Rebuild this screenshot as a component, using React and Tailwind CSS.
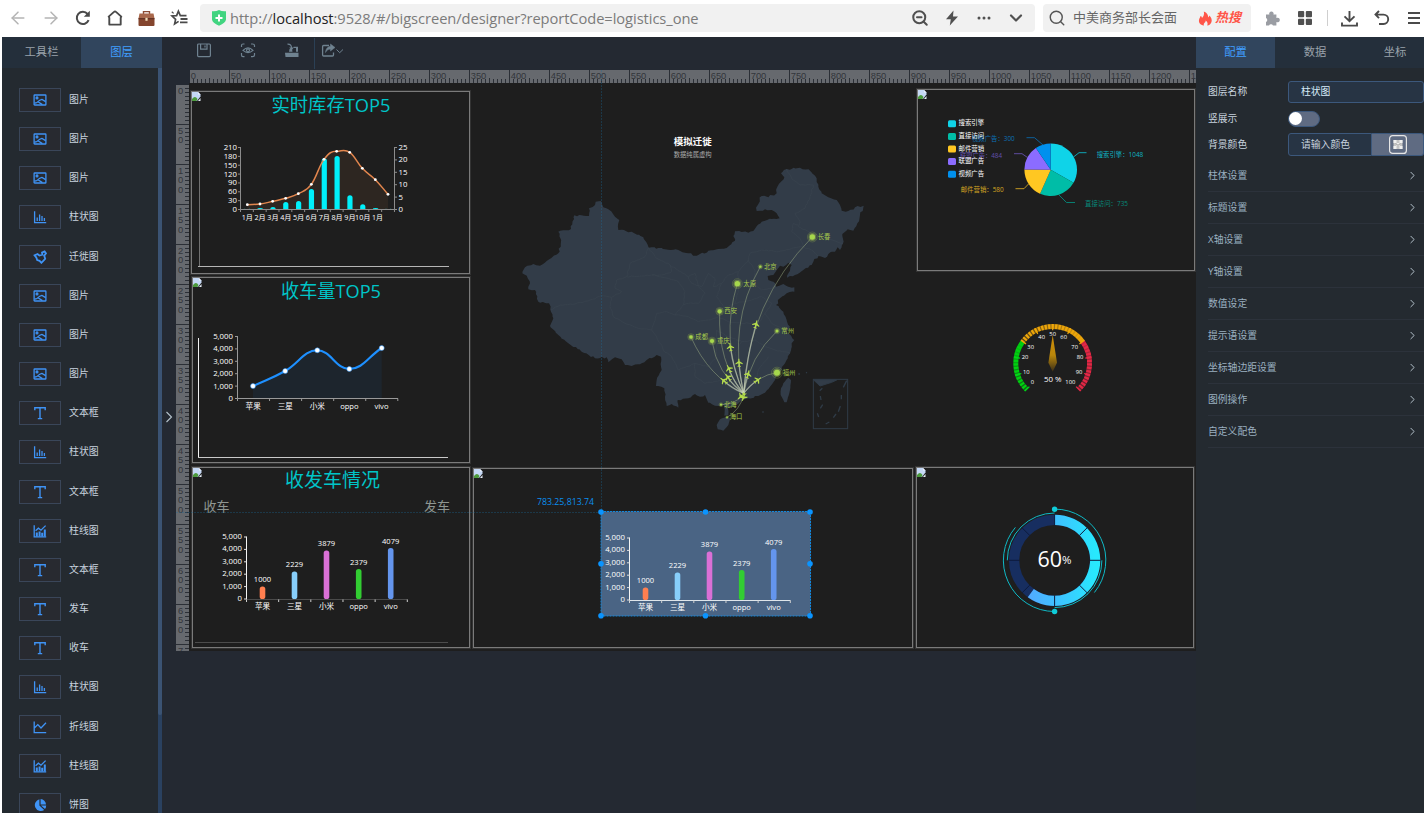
import React from "react";
import { ArrowLeft, ArrowRight, ChevronDown, ChevronRight, Search, ZoomOut } from "lucide-react";

const FONT = "'Open Sans','Noto Sans CJK SC',sans-serif";

/* ---------- shared drawing helpers ---------- */

function Label({ x, y, s = 7.8, w, a = "middle", c = "#ffffff", children, ...rest }) {
  return (
    <text
      x={x}
      y={y}
      fontSize={s}
      fill={c}
      textAnchor={a}
      dominantBaseline="central"
      textLength={w}
      lengthAdjust="spacingAndGlyphs"
      {...rest}
    >
      {children}
    </text>
  );
}

function smooth(pts) {
  let d = `M${pts[0][0]} ${pts[0][1]}`;
  const n = pts.length;
  const m = pts.map((p, i) => {
    if (i === 0) return (pts[1][1] - p[1]) / (pts[1][0] - p[0]);
    if (i === n - 1) return (p[1] - pts[i - 1][1]) / (p[0] - pts[i - 1][0]);
    const s0 = (p[1] - pts[i - 1][1]) / (p[0] - pts[i - 1][0]);
    const s1 = (pts[i + 1][1] - p[1]) / (pts[i + 1][0] - p[0]);
    return s0 * s1 <= 0 ? 0 : (s0 + s1) / 2;
  });
  for (let i = 0; i < n - 1; i++) {
    const h = (pts[i + 1][0] - pts[i][0]) / 2.4;
    d += `C${pts[i][0] + h} ${pts[i][1] + m[i] * h} ${pts[i + 1][0] - h} ${pts[i + 1][1] - m[i + 1] * h} ${pts[i + 1][0]} ${pts[i + 1][1]}`;
  }
  return d;
}

function polar(cx, cy, r, deg) {
  const t = ((deg - 90) * Math.PI) / 180;
  return [cx + r * Math.cos(t), cy + r * Math.sin(t)];
}

function arc(cx, cy, r, a0, a1) {
  const [x0, y0] = polar(cx, cy, r, a0);
  const [x1, y1] = polar(cx, cy, r, a1);
  return `M${x0} ${y0}A${r} ${r} 0 ${a1 - a0 > 180 ? 1 : 0} 1 ${x1} ${y1}`;
}

function roughen(text, amp = 3) {
  const pts = text.trim().split(/\s+/).map((p) => p.split(",").map(Number));
  let seed = 7;
  const rnd = () => {
    seed = (seed * 16807) % 2147483647;
    return seed / 2147483647 - 0.5;
  };
  const out = [];
  pts.forEach((p, i) => {
    out.push(p);
    const q = pts[i + 1];
    if (!q) return;
    const len = Math.hypot(q[0] - p[0], q[1] - p[1]);
    const k = Math.floor(len / 7);
    for (let j = 1; j < k; j++) {
      out.push([p[0] + ((q[0] - p[0]) * j) / k + rnd() * amp * 2, p[1] + ((q[1] - p[1]) * j) / k + rnd() * amp * 2]);
    }
  });
  return out.map((p) => `${p[0].toFixed(1)},${p[1].toFixed(1)}`).join(" ");
}

/* ---------- browser bar ---------- */

function BrowserBar() {
  return (
    <header className="flex h-[37px] w-full shrink-0 items-center bg-white pb-px">
      <div className="flex w-[200px] items-center text-[#555]">
        <div className="flex w-[34px] justify-end pr-1.5"><ArrowLeft size={20} strokeWidth={1.8} className="text-[#b4b4b4]" /></div>
        <div className="flex w-[33px] justify-center"><ArrowRight size={20} strokeWidth={1.8} className="text-[#b4b4b4]" /></div>
        <div className="flex w-8 justify-center">
          <svg width="16" height="16" viewBox="0 0 16 16" fill="none" stroke="#4a4a4a" strokeWidth="2">
            <path d="M13.6 10.2A6.1 6.1 0 1 1 12.6 4" />
            <path d="M14.8 0.8v6H8.8z" fill="#4a4a4a" stroke="none" />
          </svg>
        </div>
        <div className="flex w-8 justify-center">
          <svg width="16" height="16" viewBox="0 0 16 16" fill="none" stroke="#4a4a4a" strokeWidth="1.9" strokeLinejoin="round">
            <path d="M8 1.500 Q8.600 1.500 9 1.900L14.300 6.600Q13.700 7 13.700 8V14.600H2.300V8Q2.300 7 1.700 6.600L7 1.900Q7.400 1.500 8 1.500Z" />
          </svg>
        </div>
        <div className="flex w-[31px] justify-center">
          <svg width="17" height="17" viewBox="0 0 17 17">
            <path d="M5.500 4V1.600h6V4" fill="none" stroke="#8a4a32" strokeWidth="1.400" />
            <path d="M1.500 3.400H15.500L16.600 9H0.400Z" fill="#a9684c" />
            <rect x="0.500" y="8.400" width="16" height="7.600" rx="1" fill="#84452e" />
            <rect x="0.500" y="8.200" width="16" height="1" fill="#5a2c1e" />
            <rect x="7.400" y="7.800" width="2.200" height="3" fill="#f0dcb8" />
          </svg>
        </div>
        <div className="flex w-[33px] justify-center">
          <svg width="18" height="18" viewBox="0 0 18 18" fill="none" stroke="#4a4a4a" strokeWidth="1.700">
            <path d="M8.600 12.400 4.600 15 5.600 10.400 2 7 6.600 6.600 8.400 2.200 10.300 6.600 16.500 6.600" />
            <path d="M10.500 10h7M10 13.300h7.500" strokeWidth="1.800" />
            <path d="M1.800 2.800 3.600 4.400" strokeWidth="1.200" />
          </svg>
        </div>
      </div>
      <div className="flex h-7 w-[835px] items-center rounded bg-[#f1f1f1] pl-3">
        <svg width="14" height="16" viewBox="0 0 14 16">
          <path d="M0 1.200Q4 1.600 7 0 10 1.600 14 1.200V9.500Q13.600 13 7 15.800 0.400 13 0 9.500Z" fill="#41d480" />
          <path d="M7 4.400v7M3.500 7.900h7" stroke="#fff" strokeWidth="2" />
        </svg>
        <span className="ml-1 whitespace-nowrap text-[14.700px] tracking-[-0.070px] text-[#7b7b7b]">
          http://<span className="text-[#222]">localhost</span>:9528/#/bigscreen/designer?reportCode=logistics_one
        </span>
        <div className="ml-auto flex items-center text-[#505050]">
          <div className="flex w-8 justify-center"><ZoomOut size={18} strokeWidth={2.700} /></div>
          <div className="flex w-8 justify-center">
            <svg width="14" height="16" viewBox="0 0 14 16"><path d="M8.500 0.500 1 9.200H5.800L4.800 15.500 13 6.500H8Z" fill="#505050" /></svg>
          </div>
          <div className="flex w-8 justify-center">
            <svg width="14" height="4" viewBox="0 0 14 4" fill="#505050"><circle cx="2" cy="2" r="1.500" /><circle cx="7" cy="2" r="1.500" /><circle cx="12" cy="2" r="1.500" /></svg>
          </div>
          <div className="mr-[3px] flex w-8 justify-center"><ChevronDown size={20} strokeWidth={2.600} /></div>
        </div>
      </div>
      <div className="ml-2 flex h-7 w-[208px] items-center rounded bg-[#f1f1f1] pl-[5px]">
        <Search size={18} strokeWidth={1.900} className="text-[#555]" />
        <span className="ml-[7px] w-[116px] whitespace-nowrap text-[13px] text-[#666]">中美商务部长会面</span>
        <svg className="ml-[9px]" width="15" height="15" viewBox="0 0 15 15">
          <path d="M6 14.600C2 14 0.600 11.500 1 9 1.300 7.200 2.200 6.600 2.500 5 3.600 5.400 3.900 6.200 4 7 5.500 5.500 6.600 3.500 5.800 0.500 9 1.600 10.300 4.200 10.200 6.400 10.900 6 11.200 5.400 11.300 4.600 13.300 6.500 14.200 8.800 13.500 11 12.900 13 11.300 14.200 9.200 14.600 10.200 12.600 9.300 11 7.700 9.600 7.800 11.200 6.700 11.400 6 12.400 5.600 13.100 5.600 13.800 6 14.600Z" fill="#ff5548" />
        </svg>
        <span className="ml-0.5 text-[13px] font-bold italic text-[#ff5548]">热搜</span>
      </div>
      <div className="flex flex-1 items-center">
        <svg className="ml-[13px]" width="17" height="17" viewBox="0 0 17 17">
          <path d="M2 4.500H5.400A2.200 2.200 0 1 1 9.400 4.500H12.400V8A2.300 2.300 0 1 1 12.400 12V15.500H9A2.200 2.200 0 0 0 5 15.500H2V12A2.200 2.200 0 0 0 2 8Z" fill="#9a9da3" />
        </svg>
        <svg className="ml-4" width="16" height="16" viewBox="0 0 16 16" fill="#505050">
          <rect x="1" y="1" width="6.200" height="6.200" rx="1" /><rect x="8.800" y="1" width="6.200" height="6.200" rx="1" />
          <rect x="1" y="8.800" width="6.200" height="6.200" rx="1" /><rect x="8.800" y="8.800" width="6.200" height="6.200" rx="1" />
        </svg>
        <div className="ml-[14px] h-4 w-px bg-[#cfcfcf]" />
        <svg className="ml-[13px]" width="17" height="17" viewBox="0 0 17 17" fill="none" stroke="#4a4a4a" strokeWidth="1.900">
          <path d="M8.500 1v10M3.500 6.400 8.500 11.200 13.500 6.400M1 12.500V15.600H16V12.500" />
        </svg>
        <svg className="ml-4" width="16" height="16" viewBox="0 0 16 16" fill="none" stroke="#4a4a4a" strokeWidth="1.900">
          <path d="M5 1 1.500 4.600 5 8.200M1.500 4.600H9.500A4.700 4.700 0 0 1 9.500 14H5" />
        </svg>
        <svg className="ml-[18px]" width="13" height="14" viewBox="0 0 13 14" stroke="#4a4a4a" strokeWidth="1.900"><path d="M0 2h12M0 7h12M0 12h12" /></svg>
      </div>
    </header>
  );
}

/* ---------- layer list ---------- */

function LayerIcon({ type }) {
  const p = { fill: "none", stroke: "#3f93f5", strokeWidth: 1.300 };
  return (
    <svg width="14" height="14" viewBox="0 0 14 14" {...p}>
      {type === "img" && (<><rect x="1.100" y="2" width="11.800" height="10" rx="0.600" /><circle cx="4" cy="4.900" r="0.900" /><path d="M1.500 10Q3.500 10.200 5 8.600T9 6.400L12.600 8.600M5 8.800 9.400 11.600" /></>)}
      {type === "text" && (<path d="M1.800 4.200V1.800H12.200V4.200M7 1.800V12.400M4.800 12.600H9.200" strokeWidth="1.400" />)}
      {type === "bar" && (<><path d="M1.600 1.200V12.600H13.200" /><path d="M4.200 11V7.500M6.600 11V4.500M9 11V6M11.400 11V8" /></>)}
      {type === "map" && (<path strokeWidth="1.800" d="M1.600 5.400 4.600 4 6.400 5.600 9.400 4.600 9 2.600 11.600 1.400 13 3.400 11.200 5.600 12.200 8.800 9.800 11.400 8.400 12.800 6.600 10.800 4.200 10 3.400 7.600Z" />)}
      {type === "mix" && (<><path d="M1.200 1.200V12.800H13.200M2.600 6.800 5.400 4.200 8 6.200 12.600 1.600" /><path strokeWidth="2" d="M3.800 12.600V8.600M6.600 12.600V7.400M9.200 12.600V8.800M11.800 12.600V5.600" /></>)}
      {type === "line" && (<path d="M1.200 1.600V12.600H13.200M1.600 7.800 4.800 4.600 8 8 13 2.800" />)}
      {type === "pie" && (<><path fill="#3f93f5" stroke="none" d="M6.400 1.200V7.600L11.200 12A6 6 0 1 1 6.400 1.200Z" /><path fill="#3f93f5" stroke="none" d="M7.600 1V6.400H13A5.600 5.600 0 0 0 7.600 1ZM8 7.400 12 11Q13.200 9.500 13.200 7.400Z" /></>)}
    </svg>
  );
}

const LAYERS = [
  ["img", "图片"], ["img", "图片"], ["img", "图片"], ["bar", "柱状图"], ["map", "迁徙图"],
  ["img", "图片"], ["img", "图片"], ["img", "图片"], ["text", "文本框"], ["bar", "柱状图"],
  ["text", "文本框"], ["mix", "柱线图"], ["text", "文本框"], ["text", "发车"], ["text", "收车"],
  ["bar", "柱状图"], ["line", "折线图"], ["mix", "柱线图"], ["pie", "饼图"],
];

function LayerPanel() {
  return (
    <aside className="flex h-full w-40 shrink-0 flex-col bg-[#242a30]">
      <div className="flex h-[31px] shrink-0 text-[11.300px] leading-[30px]">
        <div className="w-[79px] bg-[#242f3b] text-center text-[#9aa3ab]">工具栏</div>
        <div className="w-[81px] bg-[#31455d] text-center text-[#409eff]">图层</div>
      </div>
      <div className="flex min-h-0 flex-1">
        <ul className="flex-1 overflow-hidden pl-[17px] pt-5">
          {LAYERS.map(([type, name], i) => (
            <li key={i} className="flex h-[39.170px] items-start">
              <span className="flex h-6 w-[42px] items-center justify-center border border-[#3a4659] bg-[#282a30]"><LayerIcon type={type} /></span>
              <span className="ml-2 text-[9.900px] leading-[23px] text-[#c8d3df]">{name}</span>
            </li>
          ))}
        </ul>
        <div className="w-1 bg-[#2a4160]"><div className="h-[647px] rounded-b bg-[#3b5373]" /></div>
      </div>
    </aside>
  );
}

/* ---------- rulers ---------- */

function TopRuler() {
  const ticks = [];
  for (let i = 0; i <= 251; i++) {
    const major = i % 10 === 0;
    ticks.push(<path key={i} d={`M${i * 4 - 0.500} ${major ? 0 : i % 5 === 0 ? 8 : 9}V13`} />);
  }
  return (
    <svg width="1006" height="13" className="block shrink-0 bg-[#66696e]">
      <g stroke="#2b2f36" strokeWidth="1">{ticks}</g>
      <g fontFamily="'Liberation Sans',sans-serif" fontSize="9.400" fill="#33363b">
        {Array.from({ length: 25 }, (_, k) => (<text key={k} x={k * 40 + 0.700} y="9">{k * 50}</text>))}
        <text x="1000.700" y="9">1</text>
      </g>
    </svg>
  );
}

function SideRuler() {
  const ticks = [];
  for (let i = 0; i <= 141; i++) {
    const major = i % 10 === 0;
    ticks.push(<path key={i} d={`M${major ? 0 : 9} ${i * 4 - 0.500}H13`} />);
  }
  return (
    <svg width="13" height="566" className="block shrink-0 bg-[#66696e]">
      <g stroke="#2b2f36" strokeWidth="1">{ticks}</g>
      <g fontFamily="'Liberation Sans',sans-serif" fontSize="9.400" fill="#33363b">
        {Array.from({ length: 14 }, (_, k) =>
          String(k * 50).split("").map((ch, j) => (<text key={`${k}-${j}`} x="2" y={k * 40 + 9 + j * 9.400}>{ch}</text>))
        )}
        <text x="2" y="569">7</text>
      </g>
    </svg>
  );
}

/* ---------- canvas widgets ---------- */

function Picture({ className }) {
  return (
    <div className={`absolute border border-[#7a7a7a] shadow-[0_0_0_1px_#333] ${className}`}>
      <svg width="9" height="9" viewBox="0 0 9 9" className="block">
        <path d="M0 0H6L8.500 2.500V4.500L5 9H0Z" fill="#c5d8f5" />
        <path d="M0 7Q3 3 5.500 7L4.500 9H0Z" fill="#4c9a3c" />
        <path d="M6 0V2.500H8.500Z" fill="#eef3fb" />
        <path d="M8.500 6V9H6Z" fill="#e8f0fa" />
      </svg>
    </div>
  );
}

function StockChart() {
  const tops = [627, 624, 621, 606, 603, 567, 475, 468, 586, 613, 624, 627];
  const pts = [[742, 614], [780, 612], [818, 604], [857, 595], [895, 581], [934, 553], [972, 478], [1010, 454], [1049, 457], [1087, 505], [1126, 539], [1164, 583]].map(([a, b]) => [a / 3, b / 3]);
  const d = smooth(pts);
  return (
    <svg className="absolute left-[3px] top-[9px]" width="276" height="180" viewBox="192 92 276 180" fontFamily={FONT}>
      <path d="M199.500 149V267" stroke="#707070" />
      <path d="M198 266.500H449" stroke="#b5b5b5" />
      <Label x={331} y={105} s={18.800} w={119} c="#00c5c8">实时库存TOP5</Label>
      <path d={`${d}V209H247.300Z`} fill="#e8894e" opacity="0.080" />
      {tops.map((t, i) => (
        <path key={i} d={`M${244.700 + i * 12.830} 209V${Math.min(t / 3 + 2.500, 208.500)}Q${244.700 + i * 12.830} ${t / 3} ${247.300 + i * 12.830} ${t / 3}T${249.900 + i * 12.830} ${Math.min(t / 3 + 2.500, 208.500)}V209Z`} fill="#00f0fa" />
      ))}
      <g stroke="#8c8c8c" fill="none">
        <path d="M240.500 147V209.500H394.500V147" />
        {Array.from({ length: 8 }, (_, i) => <path key={i} d={`M238 ${147.500 + i * 8.860}H240.500`} />)}
        {Array.from({ length: 6 }, (_, i) => <path key={i} d={`M394.500 ${147.500 + i * 12.400}H397`} />)}
        {Array.from({ length: 13 }, (_, i) => <path key={i} d={`M${240.500 + i * 12.830} 209.500V212`} />)}
      </g>
      <path d={d} fill="none" stroke="#e2864e" strokeWidth="1.500" />
      {pts.map(([x, y], i) => <circle key={i} cx={x} cy={y} r="1.400" fill="#fff" />)}
      {[210, 180, 150, 120, 90, 60, 30, 0].map((v, i) => <Label key={v} x={237} y={147 + i * 8.860} a="end">{v}</Label>)}
      {[25, 20, 15, 10, 5, 0].map((v, i) => <Label key={v} x={398.500} y={147 + i * 12.400} a="start">{v}</Label>)}
      {["1月", "2月", "3月", "4月", "5月", "6月", "7月", "8月", "9月", "10月"].map((v, i) => <Label key={v} x={247.300 + i * 12.830} y={216.500} s={7.300} w={v.length > 2 ? 15.500 : 11.300}>{v}</Label>)}
      <Label x={377.500} y={216.500} s={7.300} w={11}>1月</Label>
    </svg>
  );
}

function VolumeChart() {
  const pts = [[253, 386], [285.200, 371], [317.300, 350.300], [349.300, 369], [381.700, 348]];
  const d = smooth(pts);
  return (
    <svg className="absolute left-[4px] top-[196px]" width="275" height="182" viewBox="193 279 275 182" fontFamily={FONT}>
      <path d="M198.500 338V458" stroke="#f4f4f4" />
      <path d="M198 457.500H448" stroke="#c9c9c9" />
      <Label x={331} y={291} s={18.800} w={100} c="#00c5c8">收车量TOP5</Label>
      <path d={`${d}V398H253Z`} fill="#1e90ff" opacity="0.070" />
      <g stroke="#999" fill="none">
        <path d="M237.500 336V398.500H398" />
        {Array.from({ length: 6 }, (_, i) => <path key={i} d={`M235 ${336.500 + i * 12.400}H237.500`} />)}
        {Array.from({ length: 6 }, (_, i) => <path key={i} d={`M${237.500 + i * 32.060} 398.500V401`} />)}
      </g>
      <path d={d} fill="none" stroke="#1e90ff" strokeWidth="2.100" />
      {pts.map(([x, y], i) => <circle key={i} cx={x} cy={y} r="2.500" fill="#fff" stroke="#1e90ff" strokeWidth="0.500" />)}
      {["5,000", "4,000", "3,000", "2,000", "1,000", "0"].map((v, i) => <Label key={v} x={233} y={336 + i * 12.400} a="end">{v}</Label>)}
      {["苹果", "三星", "小米", "oppo", "vivo"].map((v, i) => <Label key={v} x={253.200 + i * 32.060} y={405.700} s={7.600}>{v}</Label>)}
    </svg>
  );
}

function SalesBars({ axis = "#fff" }) {
  const data = [
    [262.500, 586.500, "1000", "苹果", "#ff7f50"],
    [294.500, 571.500, "2229", "三星", "#87cefa"],
    [326.500, 550.500, "3879", "小米", "#da70d6"],
    [358.700, 569, "2379", "oppo", "#32cd32"],
    [390.700, 548, "4079", "vivo", "#6495ed"],
  ];
  return (
    <g fontFamily={FONT}>
      <path d="M246.500 536.500V599.500" stroke="#f5f5f5" />
      <path d="M246.500 599.500H407.500" stroke={axis} />
      {Array.from({ length: 6 }, (_, i) => <path key={i} d={`M244 ${537 + i * 12.400}H246.500`} stroke="#e0e0e0" />)}
      {Array.from({ length: 6 }, (_, i) => <path key={i} d={`M${246.500 + i * 32.160} 599.500V602`} stroke="#d0d0d0" />)}
      {["5,000", "4,000", "3,000", "2,000", "1,000", "0"].map((v, i) => <Label key={v} x={242} y={536 + i * 12.400} a="end">{v}</Label>)}
      {data.map(([x, y, v, n, c]) => (
        <g key={n}>
          <rect x={x - 2.800} y={y} width="5.600" height={599 - y} rx="2.600" fill={c} />
          <Label x={x} y={y - 7.400} s={7.800} w={17.300}>{v}</Label>
          <Label x={x} y={605.700} s={7.600}>{n}</Label>
        </g>
      ))}
    </g>
  );
}

function ShippingPanel() {
  return (
    <svg className="absolute left-[4px] top-[385px]" width="275" height="179" viewBox="193 468 275 179" fontFamily={FONT}>
      <Label x={332.500} y={480} s={19} w={95} c="#00c5c8">收发车情况</Label>
      <Label x={216.500} y={506} s={13} c="#8f9691">收车</Label>
      <Label x={437} y={506} s={13} c="#8f9691">发车</Label>
      <path d="M195 642.500H448" stroke="#4c4c4c" />
      <SalesBars axis="#4a4a4a" />
    </svg>
  );
}

const CHINA = `142,370 150,352 175,342 195,347 215,333 250,310 258,275 250,245 288,237 298,196 342,198 342,175 360,165 362,155 378,153 385,172 410,185 420,200 433,210 430,240 470,245 505,262 521,293 560,294 610,300 640,310 665,317 700,302 755,294 780,272 775,258 780,244 800,246 820,248 840,236 860,215 890,207 914,205 905,190 890,180 870,178 845,183 843,173 860,138 880,142 905,130 905,115 918,95 928,82 918,70 935,57 970,54 1005,62 1025,85 1030,110 1040,130 1060,142 1085,150 1095,165 1100,182 1120,183 1140,172 1166,167 1155,195 1147,220 1135,242 1118,238 1102,252 1104,280 1095,300 1088,292 1080,305 1060,312 1050,324 1030,318 1015,335 1010,345 985,360 960,375 936,383 945,362 950,345 940,338 925,350 915,347 905,360 895,375 878,378 880,390 895,395 903,410 925,402 940,410 958,412 958,425 935,430 915,445 903,465 925,485 935,510 945,530 935,545 958,570 950,580 945,610 930,640 920,660 900,690 885,710 870,728 850,738 820,745 800,752 780,765 758,772 760,795 748,797 746,765 720,767 700,758 690,735 675,740 660,732 640,745 608,750 610,773 590,762 575,768 570,740 568,715 543,708 545,690 560,660 558,620 545,615 515,630 500,640 470,648 450,645 440,628 420,622 400,637 395,622 360,625 320,605 280,580 250,555 225,528 235,505 228,485 222,460 190,455 180,420 160,418 165,400 158,385 142,370`;

const PROVINCES = [
  "228,480 255,465 300,462 345,450 380,437 410,442 405,470 415,500 450,520 490,535 530,540 545,560 565,600",
  "521,293 510,320 465,340 455,380 425,390 420,415 440,425 410,442",
  "455,380 500,378 530,375 580,385 610,395 630,425 625,465 600,495 575,485 545,490 530,540",
  "521,293 545,325 585,345 590,365 560,375 530,375",
  "585,345 640,380 660,370 670,410 690,430 670,460 640,460 625,465",
  "640,380 650,400 680,410 700,370 720,385 715,410 740,400 760,375 790,365 820,330",
  "740,400 725,440 745,470 730,500 700,510 670,515 640,500 600,495",
  "820,330 825,310 860,300 910,305 950,295 985,290 975,265 950,245 955,220 970,225",
  "935,57 950,85 975,105 1015,105 1005,140 990,175 960,190 975,215 970,230 1010,250 1050,265 1104,280",
  "985,290 1010,300 1030,318",
  "790,365 790,420 780,460 740,475",
  "820,330 840,360 835,400 860,420 903,410",
  "780,460 830,450 860,440 890,460 870,490 890,520 935,545",
  "730,500 760,515 800,520 850,520 870,490",
  "725,540 760,560 800,575 840,570 870,590 900,600 945,610",
  "565,600 590,620 610,660 635,650 660,640 700,650 725,620 725,540",
  "660,640 660,680 690,700 740,690 770,700 800,690 840,700 850,660 880,620",
  "800,575 780,610 790,650 800,690",
];

const PLANES = [
  [843, 523, 15], [766, 591, -8], [792, 638, -3], [762, 656, -28], [759, 682, -38], [746, 692, -50], [819, 673, 15], [848, 690, 55], [798, 739, 230], [806, 741, 200],
];

const ROUTES = [
  ["M1012 261Q820 455 806 730", "M843 523Q815 620 806 730"],
  ["M856 350Q758 520 806 730", "M792 638Q795 680 806 730"],
  ["M787 401Q735 570 806 730", "M766 591Q775 660 806 730"],
  ["M734 484Q728 640 806 730", "M762 656Q775 695 806 730"],
  ["M648 561Q700 680 806 730", "M746 692Q770 715 806 730"],
  ["M711 573Q725 670 806 730", "M759 682Q775 708 806 730"],
  ["M906 543Q825 620 806 730", "M819 673Q810 700 806 730"],
  ["M906 668Q850 675 806 730", "M848 690Q825 705 806 730"],
  ["M738 764Q775 765 806 735", ""],
  ["M756 802Q795 780 806 735", ""],
];

const CITIES = [
  [1012, 261, 9, "长春", 1028], [856, 350, 4, "北京", 867], [787, 401, 9, "太原", 805], [734, 484, 7, "西安", 748],
  [648, 561, 6, "成都", 661], [711, 573, 7, "重庆", 726], [906, 543, 5, "常州", 919], [906, 668, 10, "福州", 923],
  [738, 764, 3.500, "北海", 747], [756, 802, 2.500, "海口", 764],
];

function MigrationMap() {
  return (
    <svg className="absolute left-[286px] top-[37px]" width="450" height="330" viewBox="0 -90 1350 990" fontFamily={FONT}>
      <Label x={653} y={-25} s={29} w={114} c="#fff" fontWeight="700">模拟迁徙</Label>
      <Label x={653} y={14} s={19} w={114} c="#aaa">数据纯属虚构</Label>
      <polygon points={roughen(CHINA)} fill="#323c48" />
      <polygon points={roughen("725,825 735,808 755,800 766,805 760,825 745,842 728,838 725,825", 1)} fill="#323c48" />
      <polygon points={roughen("925,700 940,683 948,690 945,720 935,757 928,757 917,735 918,715 925,700", 1)} fill="#323c48" />
      {PROVINCES.map((p) => <polyline key={p} points={roughen(p, 2)} fill="none" stroke="#3a444f" strokeWidth="2" />)}
      <g fill="none" stroke="#2f3b47" strokeWidth="3">
        <rect x="1015" y="688" width="103" height="148" />
        <path d="M1016 690H1085L1070 697 1035 708Z" fill="#323c48" />
        <path d="M1115 692 1105 712M1099 735V748M1096 768 1090 785M1083 792 1075 803M1063 816 1052 822M1027 790 1031 801M1036 775 1043 764M1036 738 1038 750M1034 722 1042 715" strokeWidth="4" />
        <path d="M970 672H975M993 667 996 669M862 786H866" strokeWidth="4" />
      </g>
      {ROUTES.map(([a, b]) => (
        <g key={a} fill="none">
          <path d={a} stroke="#a6b88a" strokeWidth="3" opacity="0.450" />
          {b && <path d={b} stroke="#dfe8d0" strokeWidth="4" opacity="0.500" />}
        </g>
      ))}
      {PLANES.map(([x, y, r], i) => (
        <path key={i} transform={`translate(${x} ${y}) rotate(${r})`} fill="#b4dc4a" d="M-1.500 -12H1.500L2 -4 11 2V5L2 2 1.500 8 5 11V13L0 11.500 -5 13V11L-1.500 8 -2 2 -11 5V2L-2 -4Z" />
      ))}
      {CITIES.map(([x, y, r, n, tx]) => (
        <g key={n}>
          <circle cx={x} cy={y} r={r * 1.650} fill="none" stroke="#a6c84c" strokeWidth="1.500" opacity="0.500" />
          <circle cx={x} cy={y} r={r * 1.300} fill="#a6c84c" opacity="0.450" />
          <circle cx={x} cy={y} r={r * 0.900} fill="#a6d84c" />
          <Label x={tx} y={y - 2} s={19} w={38} a="start" c="#a6c84c">{n}</Label>
        </g>
      ))}
    </svg>
  );
}

function PieChart() {
  const data = [
    [1048, "#0fd3e8", "搜索引擎", 1096.700, 155, 46.500, "#0fb3c4"],
    [735, "#00bda7", "直接访问", 1085, 204, 43, "#06897a"],
    [580, "#ffc722", "邮件营销", 960.700, 190, 43, "#d6a722"],
    [484, "#8b6cff", "联盟广告", 960, 156, 42, "#6350ad"],
    [300, "#0090ee", "视频广告", 972, 139, 42.700, "#0b72b8"],
  ];
  const cx = 1050.700, cy = 169.700, r = 26.300;
  let at = 0;
  const slices = data.map(([v, c]) => {
    const a1 = at + (v / 3147) * 360;
    const d = `${arc(cx, cy, r, at, a1)}L${cx} ${cy}Z`;
    at = a1;
    return <path key={c} d={d} fill={c} />;
  });
  return (
    <svg className="absolute left-[751px] top-[27px]" width="250" height="110" viewBox="940 110 250 110" fontFamily={FONT}>
      {slices}
      <g fill="none" strokeWidth="0.900">
        <path d="M1073.500 157 1079 152.700H1086.500" stroke="#0fb3c4" />
        <path d="M1059 195 1066.500 202.500H1075" stroke="#06897a" />
        <path d="M1028.500 184 1024 188.700H1015.500" stroke="#d6a722" />
        <path d="M1027.500 157.500 1022 153.700H1014" stroke="#6350ad" />
        <path d="M1043 145 1034.500 137.700H1026.500" stroke="#0b68a8" />
      </g>
      {data.map(([v, c, n, x, y, w, t]) => <Label key={n} x={x} y={y - 0.300} s={6.400} w={w} a="start" c={t}>{`${n}：${v}`}</Label>)}
      {data.map(([v, c, n], i) => (
        <g key={n}>
          <rect x="948" y={120.300 + i * 12.600} width="8" height="7" rx="1.500" fill={c} />
          <Label x={958.500} y={122.800 + i * 12.600} s={6.500} w={25.700} a="start">{n}</Label>
        </g>
      ))}
    </svg>
  );
}

function Gauge() {
  const cx = 1052.700, cy = 363.300;
  const at = (v) => -135 + v * 2.700;
  const ticks = [];
  for (let v = 0; v < 100; v += 2) {
    const o = v < 30 ? 0.600 - v * 0.020 : v < 70 ? 0.750 - (v - 30) * 0.019 : 0.150 + (v - 70) * 0.018;
    const [x0, y0] = polar(cx, cy, 34, at(v + 1));
    const [x1, y1] = polar(cx, cy, 39.600, at(v + 1));
    ticks.push(<path key={v} d={`M${x0} ${y0}L${x1} ${y1}`} opacity={Math.max(o, 0)} />);
  }
  const labels = [[0, 247, 336], [10, 229, 307], [20, 225, 263], [30, 242, 232], [40, 275, 203], [50, 308, 194], [60, 341, 203], [70, 374, 232], [80, 390, 263], [90, 387, 307], [100, 361, 336]];
  const tone = (v) => (v < 30 ? "#00d81a" : v <= 70 ? "#f0a808" : "#e82848");
  return (
    <svg className="absolute left-[816px] top-[235px]" width="96" height="85" viewBox="1005 318 96 85" fontFamily={FONT}>
      <defs>
        <linearGradient id="needle" x1="0" y1="0" x2="0" y2="1"><stop offset="0" stopColor="#d08e08" /><stop offset="0.550" stopColor="#b8860b" /><stop offset="1" stopColor="#3a2e18" /></linearGradient>
      </defs>
      <g fill="none" strokeWidth="5">
        <path d={arc(cx, cy, 36.900, at(0), at(30))} stroke="#00d010" />
        <path d={arc(cx, cy, 36.900, at(30), at(70))} stroke="#eca50a" />
        <path d={arc(cx, cy, 36.900, at(70), at(100))} stroke="#e32745" />
      </g>
      <g stroke="#1e1e1e" strokeWidth="1.200">{ticks}</g>
      {labels.map(([v]) => {
        const [x0, y0] = polar(cx, cy, 33, at(v));
        const [x1, y1] = polar(cx, cy, 39.300, at(v));
        return <path key={v} d={`M${x0} ${y0}L${x1} ${y1}`} stroke={tone(v)} strokeWidth="1.200" />;
      })}
      <path d="M1052.700 335 1057 362.700 1052.700 371.700 1048.400 362.700Z" fill="url(#needle)" />
      {labels.map(([v, x, y]) => <Label key={v} x={950 + x / 3} y={269.700 + y / 3} s={5.800}>{v}</Label>)}
      <Label x={1052.700} y={378.400} s={8} w={17.500}>50 %</Label>
    </svg>
  );
}

function ProgressRing() {
  const cx = 1054.600, cy = 560.300;
  return (
    <svg className="absolute left-[810px] top-[420px]" width="112" height="114" viewBox="999 503 112 114" fontFamily={FONT}>
      <defs>
        <linearGradient id="ring" gradientUnits="userSpaceOnUse" x1="1020" y1="0" x2="1095" y2="0"><stop offset="0" stopColor="#58a4ff" /><stop offset="0.500" stopColor="#3ec2ff" /><stop offset="1" stopColor="#28e8fd" /></linearGradient>
      </defs>
      <circle cx={cx} cy={cy} r="40.500" fill="none" stroke="#172e60" strokeWidth="10.300" />
      <path d={arc(cx, cy, 40.500, 0, 216)} fill="none" stroke="url(#ring)" strokeWidth="10.300" />
      {Array.from({ length: 8 }, (_, i) => {
        const [x0, y0] = polar(cx, cy, 35, i * 45);
        const [x1, y1] = polar(cx, cy, 46, i * 45);
        return <path key={i} d={`M${x0} ${y0}L${x1} ${y1}`} stroke="#0d1a3c" strokeWidth="1" />;
      })}
      <g fill="none" stroke="#0fb9c6" strokeWidth="1">
        <path d={arc(cx, cy, 51.200, 0, 129)} />
        <path d={arc(cx, cy, 51.200, 180, 310)} />
        <path d={arc(cx, cy, 47.300, 90, 180)} />
        <path d={arc(cx, cy, 47.300, 270, 360)} />
      </g>
      <circle cx={cx} cy="509.200" r="2.700" fill="#0fccd9" />
      <circle cx={cx} cy="611.500" r="2.700" fill="#0fccd9" />
      <Label x={1037.500} y={557.600} s={22} w={24.500} a="start">60</Label>
      <Label x={1062} y={559.300} s={10.800} w={9.500} a="start">%</Label>
    </svg>
  );
}

function Selection() {
  return (
    <svg className="absolute left-[-13px] top-[-13px]" width="640" height="550" viewBox="176 70 640 550" fontFamily={FONT}>
      <g stroke="#1a6fa0" strokeWidth="1" strokeDasharray="2 1" opacity="0.320">
        <path d="M601.500 70V511" />
        <path d="M176 512.500H601" />
      </g>
      <Label x={537} y={501.300} s={9} w={57} a="start" c="#0a90f0">783.25,813.74</Label>
      <rect x="601" y="511.500" width="209.500" height="104.500" fill="#4a6484" stroke="#1287dc" strokeDasharray="2 1" />
      <g transform="translate(383 1)"><SalesBars axis="#dfe5ea" /></g>
      {[[601, 512], [705.500, 512], [810, 512], [601, 563.700], [810, 563.700], [601, 615.700], [705.500, 615.700], [810, 615.700]].map(([x, y]) => (
        <circle key={`${x}-${y}`} cx={x} cy={y} r="2.800" fill="#0a94ff" />
      ))}
    </svg>
  );
}

/* ---------- designer ---------- */

function Toolbar() {
  const c = "#6f8290";
  return (
    <div className="flex h-[33px] shrink-0 items-start pl-[34px]">
      <svg className="mr-7 mt-1.5" width="16" height="15" viewBox="0 0 16 15" fill="none" stroke={c} strokeWidth="1.200"><rect x="1.600" y="1" width="12.800" height="12.600" rx="1" /><path d="M4.600 1V6.200H11V1M9 2.500V4.500" /></svg>
      <svg className="mr-7 mt-1.5" width="16" height="15" viewBox="0 0 16 15" fill="none" stroke={c} strokeWidth="1.200"><path d="M1.500 4V2.500Q1.500 1 3 1H4.500M11 1H12.500Q14.500 1 14.500 2.500V4M14.500 10V12Q14.500 13.600 12.500 13.600H11M4.500 13.600H3Q1.500 13.600 1.500 12V10" /><path d="M3 7.400Q8 2.500 13 7.400 8 12 3 7.400Z" /><circle cx="8" cy="7.300" r="1.500" /></svg>
      <svg className="mr-[14px] mt-1.5" width="16" height="15" viewBox="0 0 16 15" fill={c}>
        <path d="M1 9.800H14.500V14H1.500Z" />
        <path d="M1 8.800H5L5.500 6H8L8.500 8.800H12V5H9.500V3.800H14V8.800Z" />
        <path d="M3.500 1.200Q7.500 1 7.500 5" fill="none" stroke={c} strokeWidth="1.200" />
        <path d="M5.200 4.600H9.800L7.500 7.600Z" />
      </svg>
      <div className="mt-px h-[31px] w-px bg-[#2b4055]" />
      <svg className="ml-[6px] mt-1.5" width="23" height="15" viewBox="0 0 23 15" fill="none" stroke={c} strokeWidth="1.300"><path d="M8 2.500H2.600Q1.600 2.500 1.600 3.500V12Q1.600 13 2.600 13H11.500Q12.500 13 12.500 12V9.500" /><path d="M9.500 1 14 4.500 9.500 8V6Q6 6 4.500 9.500 4.800 4 9.500 3.200Z" fill={c} strokeWidth="0.500" /><path d="M15.500 6.500 18.700 9.700 22 6.500" strokeWidth="1" /></svg>
    </div>
  );
}

function Designer() {
  return (
    <main className="flex w-[1034px] shrink-0 flex-col bg-[#242932]">
      <Toolbar />
      <div className="flex">
        <div className="flex w-[14px] shrink-0 items-start justify-center pt-[341px]">
          <svg width="8" height="12" viewBox="0 0 8 12" fill="none" stroke="#b5c2cc" strokeWidth="1.100"><path d="M1.500 1 6.500 6 1.500 11" /></svg>
        </div>
        <div className="flex w-[1020px] flex-col">
          <div className="flex pl-[14px]"><TopRuler /></div>
          <div className="flex h-[568px]">
            <div className="w-[13px] pt-0.5"><SideRuler /></div>
            <div className="relative w-[1007px] bg-[#1e1e1e]">
              <Picture className="left-[2px] top-[8px] h-[183px] w-[279px]" />
              <Picture className="left-[3px] top-[194px] h-[186px] w-[278px]" />
              <Picture className="left-[3px] top-[384px] h-[181px] w-[278px]" />
              <Picture className="left-[284px] top-[385px] h-[180px] w-[440px]" />
              <Picture className="left-[728px] top-[6px] h-[182px] w-[278px]" />
              <Picture className="left-[727px] top-[384px] h-[181px] w-[278px]" />
              <StockChart />
              <VolumeChart />
              <ShippingPanel />
              <MigrationMap />
              <PieChart />
              <Gauge />
              <ProgressRing />
              <Selection />
            </div>
          </div>
        </div>
      </div>
    </main>
  );
}

/* ---------- settings ---------- */

const GROUPS = ["柱体设置", "标题设置", "X轴设置", "Y轴设置", "数值设定", "提示语设置", "坐标轴边距设置", "图例操作", "自定义配色"];

function Settings() {
  return (
    <aside className="flex w-[228px] shrink-0 flex-col overflow-hidden bg-[#242a30] text-[9.800px] text-[#c8d3df]">
      <div className="flex h-[31px] shrink-0 text-[11.300px] leading-[30px] text-[#9aa3ab]">
        <div className="w-[79px] shrink-0 bg-[#31455d] text-center text-[#409eff]">配置</div>
        <div className="w-20 shrink-0 bg-[#242f3b] text-center">数据</div>
        <div className="w-20 shrink-0 bg-[#242f3b] text-center">坐标</div>
      </div>
      <div className="flex flex-col pl-3 pt-[13px]">
        <div className="flex h-[22px] items-center">
          <span className="w-20 shrink-0 leading-5">图层名称</span>
          <div className="h-[22px] flex-1 rounded-[3px] border border-[#3c587c] bg-[#273444] pl-3 leading-[19px] text-[#d8ecfa]">柱状图</div>
        </div>
        <div className="mt-[5px] flex h-[21px] items-center">
          <span className="w-20 shrink-0 leading-5">竖展示</span>
          <div className="flex h-4 w-8 items-center rounded-full border border-[#3c587c] bg-[#5f6b82]"><div className="size-[13px] rounded-full bg-white" /></div>
        </div>
        <div className="mt-1 flex h-[23px] items-center">
          <span className="w-20 shrink-0 leading-5">背景颜色</span>
          <div className="h-[23px] w-[84px] shrink-0 rounded-l-[3px] border border-[#3c587c] bg-[#273444] pl-3 leading-[21px]">请输入颜色</div>
          <div className="flex h-[23px] flex-1 items-center justify-center rounded-r-[3px] border border-l-0 border-[#3c587c] bg-[#5f6b82]">
            <svg width="18" height="19" viewBox="0 0 18 19"><rect x="0.600" y="0.600" width="16.800" height="17.800" rx="3" fill="none" stroke="#e6e6e6" strokeWidth="1.200" /><rect x="4.500" y="5" width="9" height="9" fill="#c4c4c4" /><path d="M4.500 5h3v3h-3zM10.500 5h3v3h-3zM7.500 8h3v3h-3zM4.500 11h3v3h-3zM10.500 11h3v3h-3z" fill="#f0f0f0" /><path d="M7 8.500 9 10.500 11 8.500" stroke="#8d8d8d" fill="none" /></svg>
          </div>
        </div>
      </div>
      <ul className="ml-3 mt-1 text-[#9bb0c0]">
        {GROUPS.map((g) => (
          <li key={g} className="flex h-8 items-center justify-between border-b border-[#2c323b] pr-[5px]">
            <span className="leading-8">{g}</span>
            <ChevronRight size={13} strokeWidth={1.800} className="text-[#b5c2cc]" />
          </li>
        ))}
      </ul>
    </aside>
  );
}

export default function App() {
  return (
    <div className="flex h-[813px] w-[1424px] flex-col overflow-hidden bg-white font-['Open_Sans','Noto_Sans_CJK_SC',sans-serif]">
      <BrowserBar />
      <div className="flex min-h-0 flex-1 pl-0.5">
        <LayerPanel />
        <Designer />
        <Settings />
      </div>
    </div>
  );
}
